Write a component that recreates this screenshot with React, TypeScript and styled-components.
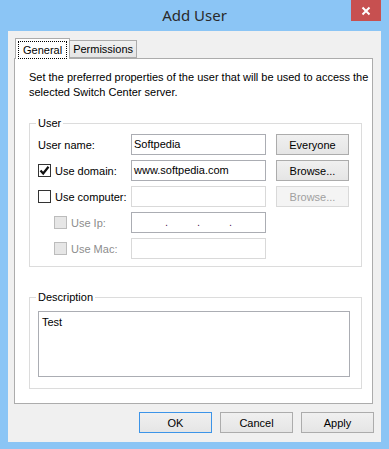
import React from "react";
import styled, { createGlobalStyle } from "styled-components";

const GlobalStyle = createGlobalStyle`
  html, body { margin: 0; padding: 0; }
  body {
    font-family: "Liberation Sans", Arial, sans-serif;
    font-size: 11px;
    color: #000;
  }
  * { box-sizing: border-box; }
`;

const Window = styled.div`
  width: 389px;
  height: 449px;
  background: #8bc5f5;
  padding: 0 8px 7px 8px;
  display: flex;
  flex-direction: column;
`;

const TitleBar = styled.div`
  height: 31px;
  display: grid;
  grid-template-columns: 1fr auto 1fr;
  align-items: start;
`;

const Title = styled.div`
  grid-column: 2;
  font-family: "Noto Sans", "Open Sans", sans-serif;
  font-size: 15px;
  line-height: 20px;
  padding-top: 5px;
  color: #2a2a2a;
`;

const CloseButton = styled.div`
  grid-column: 3;
  justify-self: end;
  width: 30px;
  height: 21px;
  background: #c75050;
  display: flex;
  align-items: center;
  justify-content: center;
`;

const Client = styled.div`
  flex: 1;
  background: #f0f0f0;
  padding: 7px 7px 0 6px;
  display: flex;
  flex-direction: column;
`;

const TabStrip = styled.div`
  display: flex;
  align-items: flex-end;
  height: 20px;
  padding-left: 1px;
`;

const Tab = styled.div<{ $active?: boolean }>`
  position: relative;
  z-index: 1;
  height: ${(p) => (p.$active ? "21px" : "18px")};
  margin-bottom: ${(p) => (p.$active ? "-1px" : "0")};
  padding: 0 ${(p) => (p.$active ? "2px" : "1px")};
  border: 1px solid #acacac;
  border-bottom: ${(p) => (p.$active ? "none" : "1px solid #acacac")};
  background: ${(p) => (p.$active ? "#ffffff" : "linear-gradient(#f0f0f0, #e5e5e5)")};
  display: flex;
  align-items: ${(p) => (p.$active ? "flex-start" : "center")};
  padding-top: ${(p) => (p.$active ? "2px" : "0")};
  line-height: 14px;
  & + & {
    margin-left: -1px;
  }
`;

const TabLabel = styled.span<{ $focused?: boolean }>`
  padding: 1px ${(p) => (p.$focused ? "4px" : "1px")};
  border: 1px dotted ${(p) => (p.$focused ? "#000" : "transparent")};
`;

const Panel = styled.div`
  width: 359px;
  height: 346px;
  background: #fff;
  border: 1px solid #acacac;
  padding: 11px 0 0 14px;
  display: flex;
  flex-direction: column;
`;

const Intro = styled.p`
  margin: 0;
  width: 342px;
  line-height: 15px;
`;

const Group = styled.fieldset<{ $top: number; $pt: number; $pb: number }>`
  width: 333px;
  margin: ${(p) => p.$top}px 0 0 0;
  min-width: 0;
  border: 1px solid #dcdcdc;
  padding: ${(p) => p.$pt}px 8px ${(p) => p.$pb}px 8px;
`;

const Legend = styled.legend`
  padding: 0 2px;
  margin-left: -2px;
  line-height: 14px;
`;

const FormGrid = styled.div`
  display: grid;
  grid-template-columns: 93px 135px 83px;
  grid-auto-rows: 21px;
  row-gap: 5px;
  align-items: center;
`;

const LabelCell = styled.div<{ $indent?: boolean; $disabled?: boolean }>`
  display: flex;
  align-items: center;
  gap: 4px;
  padding-left: ${(p) => (p.$indent ? "16px" : "0")};
  color: ${(p) => (p.$disabled ? "#8d8d8d" : "#000")};
  white-space: nowrap;
`;

const Box = styled.span<{ $disabled?: boolean }>`
  width: 13px;
  height: 13px;
  flex: none;
  border: 1px solid ${(p) => (p.$disabled ? "#bcbcbc" : "#333")};
  background: ${(p) => (p.$disabled ? "#e6e6e6" : "#fff")};
  display: flex;
  align-items: center;
  justify-content: center;
`;

const Field = styled.div<{ $disabled?: boolean }>`
  height: 21px;
  border: 1px solid ${(p) => (p.$disabled ? "#d9d9d9" : "#abadb3")};
  background: #fff;
  padding: 0 2px;
  line-height: 19px;
  white-space: nowrap;
  overflow: hidden;
`;

const IpField = styled(Field)`
  display: flex;
  padding-left: 3px;
`;

const IpSegment = styled.span`
  width: 30px;
`;

const IpDot = styled.span`
  width: 2px;
  color: #5b1a5b;
`;

const Button = styled.div<{ $primary?: boolean; $disabled?: boolean }>`
  width: 73px;
  height: 21px;
  justify-self: end;
  border: 1px solid ${(p) => (p.$primary ? "#3c94e8" : p.$disabled ? "#d9d9d9" : "#acacac")};
  background: ${(p) => (p.$disabled ? "#f4f4f4" : "linear-gradient(#f0f0f0, #e5e5e5)")};
  color: ${(p) => (p.$disabled ? "#a0a0a0" : "#000")};
  display: flex;
  align-items: center;
  justify-content: center;
  line-height: 14px;
`;

const TextArea = styled.div`
  width: 312px;
  height: 66px;
  border: 1px solid #abadb3;
  padding: 3px 3px;
  line-height: 14px;
`;

const ButtonRow = styled.div`
  display: flex;
  justify-content: flex-end;
  gap: 8px;
  padding-top: 8px;
`;

const Check = () => (
  <svg width="11" height="11" viewBox="0 0 11 11">
    <path d="M1.5 5.5 L4.2 8.5 L9.5 1.8" fill="none" stroke="#111" strokeWidth="2.2" />
  </svg>
);

const CloseIcon = () => (
  <svg width="10" height="10" viewBox="0 0 10 10">
    <path d="M1.5 1.5 L8.5 8.5 M8.5 1.5 L1.5 8.5" stroke="#fff" strokeWidth="2" />
  </svg>
);

export default function App() {
  return (
    <>
      <GlobalStyle />
      <Window>
        <TitleBar>
          <Title>Add User</Title>
          <CloseButton>
            <CloseIcon />
          </CloseButton>
        </TitleBar>
        <Client>
          <TabStrip>
            <Tab $active>
              <TabLabel $focused>General</TabLabel>
            </Tab>
            <Tab>
              <TabLabel>Permissions</TabLabel>
            </Tab>
          </TabStrip>
          <Panel>
            <Intro>
              Set the preferred properties of the user that will be used to access the selected
              Switch Center server.
            </Intro>
            <Group $top={16} $pt={4} $pb={7}>
              <Legend>User</Legend>
              <FormGrid>
                <LabelCell>User name:</LabelCell>
                <Field>Softpedia</Field>
                <Button>Everyone</Button>

                <LabelCell>
                  <Box>
                    <Check />
                  </Box>
                  Use domain:
                </LabelCell>
                <Field>www.softpedia.com</Field>
                <Button>Browse...</Button>

                <LabelCell>
                  <Box />
                  Use computer:
                </LabelCell>
                <Field $disabled />
                <Button $disabled>Browse...</Button>

                <LabelCell $indent $disabled>
                  <Box $disabled />
                  Use Ip:
                </LabelCell>
                <IpField>
                  <IpSegment />
                  <IpDot>.</IpDot>
                  <IpSegment />
                  <IpDot>.</IpDot>
                  <IpSegment />
                  <IpDot>.</IpDot>
                  <IpSegment />
                </IpField>
                <span />

                <LabelCell $indent $disabled>
                  <Box $disabled />
                  Use Mac:
                </LabelCell>
                <Field $disabled />
                <span />
              </FormGrid>
            </Group>
            <Group $top={23} $pt={7} $pb={11}>
              <Legend>Description</Legend>
              <TextArea>Test</TextArea>
            </Group>
          </Panel>
          <ButtonRow>
            <Button $primary>OK</Button>
            <Button>Cancel</Button>
            <Button>Apply</Button>
          </ButtonRow>
        </Client>
      </Window>
    </>
  );
}
